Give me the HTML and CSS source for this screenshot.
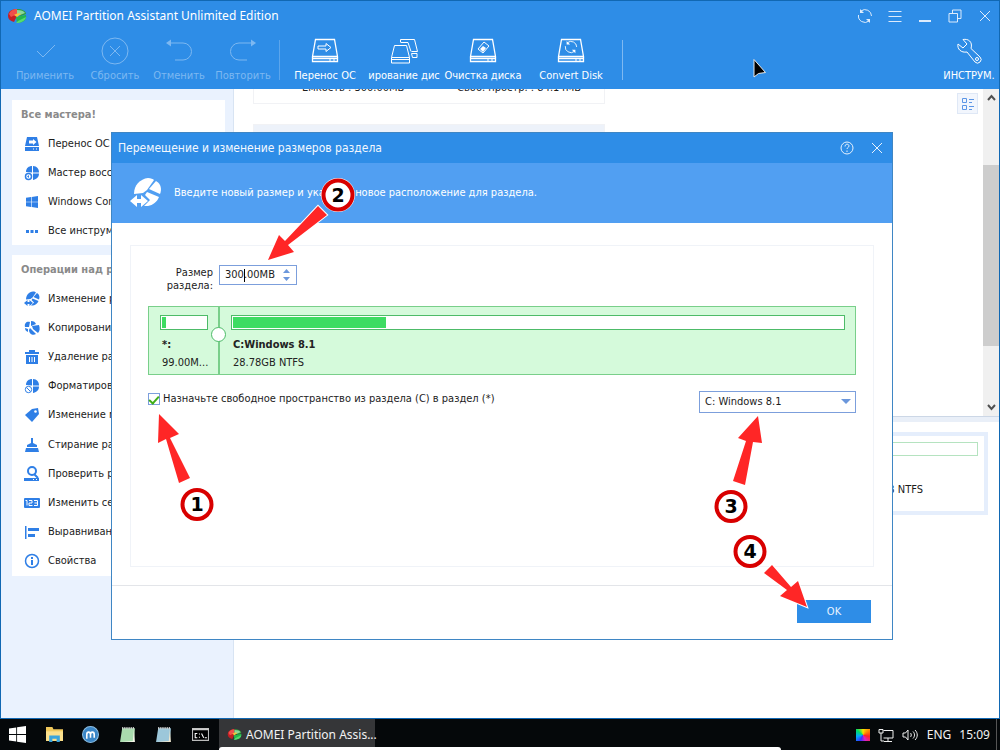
FILE: index.html
```html
<!DOCTYPE html>
<html lang="ru">
<head>
<meta charset="utf-8">
<title>AOMEI Partition Assistant</title>
<link rel="stylesheet" href="styles.css">
</head>
<body>
<svg width="0" height="0" class="defs" aria-hidden="true">
  <defs>
    <symbol id="logo" viewBox="0 0 20 16">
      <path d="M1 8C1 3 5 1 10 1v7L7 14C3 13 1 11 1 8z" fill="#c41f24"/>
      <path d="M2 6c1-3 4-5 8-5v5L4 9z" fill="#ef4f4b"/>
      <path d="M10 1c5 0 9 2 9 5l-5 2-4-2z" fill="#2f9c3b"/>
      <path d="M10 2c4 0 7 1 8 3l-5 2-3-1z" fill="#8ad79a"/>
      <path d="M9 9l10-2c1 4-2 8-9 8z" fill="#23b84d"/>
      <path d="M9 15c5 0 9-2 10-6l-8 4z" fill="#56dc6d"/>
      <path d="M7 7c3-2 6-2 7-1l-4 3z" fill="#f3c63d"/>
    </symbol>
    <symbol id="disk" viewBox="0 0 28 26">
      <path d="M4.500 1.500h19l3 17h-25zM1.500 18.500v5h25v-5M1.500 20.500h25" fill="none" stroke="currentColor" stroke-width="1.300"/>
      <path d="M18 22h2M22 22h2" stroke="currentColor"/>
    </symbol>
    <symbol id="resize" viewBox="0 0 32 32">
      <path d="M4 17C4 8 10 2 18 1c3 0 5 1 6 2l-7 10-4 3z" fill="currentColor"/>
      <path d="M26 4c5 3 6 8 4 13l-11-5z" fill="currentColor"/>
      <path d="M17 15l12 5c-2 5-6 8-11 9h-4l6-6-5-5z" fill="currentColor"/>
      <path d="M0 24l7-6v4h4v-4l7 6-7 6v-4H7v4z" fill="currentColor"/>
    </symbol>
    <symbol id="windows" viewBox="0 0 16 16">
      <path d="M0 2.300l6.800-1v6.300H0zM7.600 1.200L16 0v7.600H7.600zM0 8.400h6.800v6.300L0 13.700zM7.600 8.400H16V16l-8.400-1.200z" fill="currentColor"/>
    </symbol>
    <symbol id="refresh" viewBox="0 0 16 16">
      <path d="M4 3a6.500 6.500 0 0 1 10.500 5M12 13A6.500 6.500 0 0 1 1.500 7" fill="none" stroke="currentColor"/>
      <path d="M3 1v4h4zM13 15v-4H9z" fill="currentColor"/>
    </symbol>
  </defs>
</svg>

<div class="desktop">
  <main class="window">
    <header class="header">
      <div class="titlebar">
        <svg class="logo"><use href="#logo"/></svg>
        <h1>AOMEI Partition Assistant Unlimited Edition</h1>
        <div class="controls">
          <button aria-label="Обновить"><svg viewBox="0 0 16 16" class="plain"><use href="#refresh"/></svg></button>
          <button aria-label="Меню"><svg viewBox="0 0 16 16"><path d="M1.500 3.500h13M1.500 8.500h13M1.500 13.500h13"/></svg></button>
          <button aria-label="Свернуть"><svg viewBox="0 0 16 16"><path d="M2 13h12" stroke-width="2"/></svg></button>
          <button aria-label="Восстановить"><svg viewBox="0 0 16 16"><path d="M2 5.500h8.500V14H2zM5.500 5V2H14v8.500h-3.500"/></svg></button>
          <button aria-label="Закрыть"><svg viewBox="0 0 16 16"><path d="M3 3l10 10M13 3L3 13"/></svg></button>
        </div>
      </div>
      <nav class="toolbar">
        <button class="tool apply" disabled><svg viewBox="0 0 28 28"><path d="M6 14l6 6L24 8"/></svg>Применить</button>
        <button class="tool reset" disabled><svg viewBox="0 0 28 28"><circle cx="14" cy="14" r="13"/><path d="M9 9l10 10M19 9L9 19"/></svg>Сбросить</button>
        <button class="tool undo" disabled><svg viewBox="0 0 28 28"><path d="M4 6h14a8.500 8.500 0 0 1 0 17h-8"/><path d="M1 6l5-3.500v7z" fill="currentColor" stroke="none"/></svg>Отменить</button>
        <button class="tool redo" disabled><svg viewBox="0 0 28 28"><path d="M24 6H10a8.500 8.500 0 0 0 0 17h8"/><path d="M27 6l-5-3.500v7z" fill="currentColor" stroke="none"/></svg>Повторить</button>
        <span class="sep dim"></span>
        <button class="tool migrate"><svg viewBox="0 0 28 28"><use href="#disk" y="1" width="28" height="26"/><path d="M7 9h8V6.500l5 4-5 4V12H7z"/></svg>Перенос ОС</button>
        <button class="tool clone"><svg viewBox="0 0 28 28"><path d="M4.500 8.500h12l3 12v5.500h-18v-5.500zM1.500 20.500h18M1.500 22.500h18M10.500 5.500v-3h14l3 12h-6M11 5.500h7l3 9M21.500 16.500h5.500v4h-4.500z"/></svg>ирование дис</button>
        <button class="tool wipe"><svg viewBox="0 0 28 28"><use href="#disk" y="1" width="28" height="26"/><path d="M9 12l6-7 5 4-6 7z"/><path d="M11 12l3-3 3 2-3 4z" fill="currentColor" stroke="none"/></svg>Очистка диска</button>
        <button class="tool convert"><svg viewBox="0 0 28 28"><use href="#disk" y="1" width="28" height="26"/><use href="#refresh" x="7" y="3" width="14" height="14" stroke="none"/></svg>Convert Disk</button>
        <span class="sep"></span>
        <button class="tool tools"><svg viewBox="0 0 28 28"><path d="M3 7l5 4 4-4-4-4.500c5-1 10 2 8 9L25 20a3.500 3.500 0 0 1-5 5L12 15C6 16 2 12 3 7z"/><circle cx="22" cy="22" r="1.500"/></svg>ИНСТРУМ.</button>
      </nav>
    </header>

    <div class="content">
      <aside class="sidebar">
        <section class="panel wizards">
          <h2>Все мастера!</h2>
          <ul>
            <li><svg viewBox="0 0 16 16"><path d="M3 1h10l2 9H1zM1 11h14v4H1z"/><path d="M5 4.500h4V3l3.500 3L9 9V7.500H5z" fill="#fff"/><path d="M9 13h1M12 13h1" stroke="#fff"/></svg>Перенос ОС на SSD</li>
            <li><svg viewBox="0 0 16 16"><path d="M2 7C2 3 5 1 8 1v6.500zM9 1c4 0 6 3 6 6.500H9zM15 8.500c0 4-3 6-6 6.500V8.500z"/><circle cx="4.500" cy="11.500" r="3" fill="none" stroke="#2f7fe6" stroke-width="1.500"/><path d="M3 11.500l2-1.500v3z"/></svg>Мастер восстановления</li>
            <li><svg viewBox="0 0 16 16"><use href="#windows" x="2" y="2" width="12" height="12"/></svg>Windows Comp</li>
            <li><svg viewBox="0 0 16 16"><path d="M2 7h3v3H2zM6.500 7h3v3h-3zM11 7h3v3h-3z"/></svg>Все инструменты</li>
          </ul>
        </section>
        <section class="panel operations">
          <h2>Операции над разделом</h2>
          <ul>
            <li><svg viewBox="0 0 16 16"><use href="#resize"/></svg>Изменение размера</li>
            <li><svg viewBox="0 0 16 16"><path d="M1 7C0 3 3 1 6 2L5 7zM7 1c3 0 4 1 5 3L7 6zM8 6l7-1c1 3 1 6-1 8L9 9zM6 8l2 2 4 4c-3 2-7 0-7-4z"/><path d="M1 8l3 1v3C2 11 1 10 1 8z"/></svg>Копирование раздела</li>
            <li><svg viewBox="0 0 16 16"><path d="M5 1h6v2h4v2H1V3h4zM2 6h12v9H2z"/><path d="M5.500 8v5M8 8v5M10.500 8v5" stroke="#fff"/></svg>Удаление раздела</li>
            <li><svg viewBox="0 0 16 16"><path d="M2 7C2 3 5 1 8 1v6.500zM9 1c4 0 6 3 6 6.500H9zM15 8.500c0 4-3 6-6 6.500V8.500z"/><circle cx="4.500" cy="11.500" r="3.200" fill="#fff" stroke="#2f7fe6"/><path d="M2.500 9.500l4 4" stroke="#2f7fe6"/></svg>Форматирование раздела</li>
            <li><svg viewBox="0 0 16 16"><path d="M1 8l7-6 6-1 1 6-7 8z"/><circle cx="11.500" cy="4.500" r="1.300" fill="#fff"/></svg>Изменение метки</li>
            <li><svg viewBox="0 0 16 16"><path d="M7 1h2v5l4 2v2H3V8l4-2zM2 11h12l1 4H1z"/></svg>Стирание раздела</li>
            <li><svg viewBox="0 0 16 16"><circle cx="8" cy="5" r="4" fill="none" stroke="#2f7fe6" stroke-width="2"/><path d="M10 8l4 4" stroke="#2f7fe6" stroke-width="2"/><path d="M0 12h15v3H0z"/><path d="M9 13.500h1M12 13.500h1" stroke="#fff"/></svg>Проверить раздел</li>
            <li><svg viewBox="0 0 16 16"><rect y="3" width="16" height="10" rx="1"/><path d="M1.500 5.500H3v5M5 5.500h3V8H5v2.500h3.500M10 5.500h3.500v5H10M10.500 8h3" fill="none" stroke="#fff"/></svg>Изменить серийный</li>
            <li><svg viewBox="0 0 16 16"><path d="M1 2h1.500v13H1zM4 4h11v3H4zM4 10h7v3H4z"/></svg>Выравнивание раздела</li>
            <li><svg viewBox="0 0 16 16"><circle cx="8" cy="8" r="6.500" fill="none" stroke="#2f7fe6" stroke-width="1.500"/><path d="M7 4h2v2H7zM7 7h2v5H7z"/></svg>Свойства</li>
          </ul>
        </section>
      </aside>

      <div class="workspace">
        <section class="disks">
          <div class="list">
            <div class="disk-card"><span>Ёмкость : 300.00MB</span><span>Своб. простр. : 84.14MB</span></div>
            <div class="disk-card next"></div>
          </div>
          <button class="view" aria-label="Вид"><svg viewBox="0 0 14 14"><path d="M1.500 1.500h4v4h-4zM1.500 8.500h4v4h-4zM8 2.500h5M8 5.500h3M8 9.500h5M8 12.500h3"/></svg></button>
          <div class="scrollbar">
            <button aria-label="Вверх"><svg viewBox="0 0 9 9"><path d="M1 7l3.500-4L8 7"/></svg></button>
            <div class="track"><div class="thumb"></div></div>
            <button aria-label="Вниз"><svg viewBox="0 0 9 9"><path d="M1 2l3.500 4L8 2"/></svg></button>
          </div>
        </section>
        <section class="maps">
          <div class="map-card"><div class="usage"></div><span>28.78GB NTFS</span></div>
        </section>
      </div>
    </div>
  </main>

  <footer class="taskbar">
    <div class="launch">
      <button aria-label="Пуск"><svg viewBox="0 0 16 16" color="#fff"><use href="#windows"/></svg></button>
      <button aria-label="Проводник"><svg viewBox="0 0 16 16"><path d="M0 1h6l1 2h9v11H0z" fill="#f0c85c"/><path d="M0 5h16v9H0z" fill="#fbe08d"/><path d="M3 9h10v6h-3v-3H6v3H3z" fill="#3aa4dc"/></svg></button>
      <button aria-label="Maxthon"><svg viewBox="0 0 16 16"><circle cx="8" cy="8" r="7.500" fill="#3b86c6" stroke="#8bbce0"/><path d="M4.500 12V8c0-3 3.500-3 3.500 0v3M8 8c0-3 3.500-3 3.500 0v3" fill="none" stroke="#fff" stroke-width="1.500"/></svg></button>
      <button aria-label="Notepad"><svg viewBox="0 0 16 16"><path d="M3 2h12l-1 13H1z" fill="#a9dcae"/><path d="M13 14l1-11 1 12H2z" fill="#f4f5e8"/><path d="M3 2h12" stroke="#ddd" stroke-width="2" stroke-dasharray="1 1"/></svg></button>
      <button aria-label="Блокнот"><svg viewBox="0 0 16 16"><path d="M3 2h12l-1 13H1z" fill="#9cc7da"/><path d="M13 14l1-11 1 12H2z" fill="#eee6cf"/><path d="M3 2h12" stroke="#ddd" stroke-width="2" stroke-dasharray="1 1"/></svg></button>
      <button aria-label="Командная строка"><svg viewBox="0 0 16 16"><path d="M.5 2.500h15v11H.5z" fill="#000" stroke="#bbb"/><path d="M0 3h16" stroke="#ccc" stroke-width="2"/><path d="M5 7H3v4h2M7 7v1M7 10v1M9 7l2 4M12 11h2" fill="none" stroke="#fff"/></svg></button>
    </div>
    <button class="task"><svg class="logo"><use href="#logo"/></svg>AOMEI Partition Assis...</button>
    <div class="tray">
      <span class="spectrum"></span>
      <svg viewBox="0 0 16 16"><path d="M5.500 3.500H15v7.500H5.500M10 11v3M6 14.500h8M1 2.500h4v3.500H1zM3 6v8h3"/></svg>
      <svg viewBox="0 0 16 16"><path d="M1 6h2.500L6 3v10L3.500 10H1zM8.500 6c1 1 1 3 0 4M11 4.500c2 2 2 5 0 7M13 3c3 3 3 7 0 10"/></svg>
      <span class="lang">ENG</span>
      <time>15:09</time>
    </div>
    <div class="sheet"></div>
  </footer>

  <section class="dialog" role="dialog" aria-labelledby="dialog-title">
    <div class="dialog-title">
      <h2 id="dialog-title">Перемещение и изменение размеров раздела</h2>
      <button aria-label="Справка"><svg viewBox="0 0 14 14"><circle cx="7" cy="7" r="6"/><path d="M5 5.500c0-3 4-3 4-.5 0 1.500-2 1.500-2 3M7 9.500V11"/></svg></button>
      <button aria-label="Закрыть окно"><svg viewBox="0 0 14 14"><path d="M2 2l10 10M12 2L2 12"/></svg></button>
    </div>
    <div class="banner">
      <svg><use href="#resize"/></svg>
      <p>Введите новый размер и укажите новое расположение для раздела.</p>
    </div>
    <form class="form">
      <div class="size-row">
        <label for="size">Размер раздела:</label>
        <div class="spin">
          <input id="size" type="text" value="300.00MB">
          <svg viewBox="0 0 7 14"><path d="M0 5l3.500-4L7 5zM0 9l3.500 4L7 9z"/></svg>
          <i class="caret"></i>
        </div>
      </div>
      <div class="parts">
        <div class="part small">
          <div class="usage"><i style="width:9%"></i></div>
          <strong>*:</strong><span>99.00M...</span>
          <i class="handle"></i>
        </div>
        <div class="part large">
          <div class="usage"><i style="width:25%"></i></div>
          <strong>C:Windows 8.1</strong><span>28.78GB NTFS</span>
        </div>
      </div>
      <div class="options">
        <label class="check"><input type="checkbox" checked>Назначьте свободное пространство из раздела (C) в раздел (*)</label>
        <div class="pick">
          <select aria-label="Раздел"><option>C: Windows 8.1</option></select>
        </div>
      </div>
    </form>
    <div class="dialog-footer"><button type="button">OK</button></div>
  </section>

  <svg class="notes" viewBox="0 0 1000 750">
    <g class="arrow">
      <path d="M159 414l20 20-9 4 20 40-11 5-13-44-8 4z"/>
      <path d="M268 260l11-25 6 6 33-35 9 9-39 30 6 7z"/>
      <path d="M758 416l4 27-9-1-8 43-12-4 13-40-8-3z"/>
      <path d="M807 607l-27-11 7-6-23-17 8-8 19 22 7-6z"/>
    </g>
    <g class="badge">
      <circle class="halo" cx="197" cy="504.500" r="17"/><circle cx="197" cy="504.500" r="14.500"/><text x="197" y="511">1</text>
      <circle class="halo" cx="338" cy="195" r="17"/><circle cx="338" cy="195" r="14.500"/><text x="338" y="202">2</text>
      <circle class="halo" cx="731" cy="506.500" r="17"/><circle cx="731" cy="506.500" r="14.500"/><text x="731" y="513">3</text>
      <circle class="halo" cx="750" cy="551.500" r="17"/><circle cx="750" cy="551.500" r="14.500"/><text x="750" y="558">4</text>
    </g>
    <path class="cursor" d="M754 59.500V77l4.500-3.500 7-1z"/>
  </svg>
</div>
</body>
</html>
```

FILE: styles.css
```css
* { box-sizing: border-box; }
body {
  margin: 0;
  font: 11px/14px "DejaVu Sans Condensed", "DejaVu Sans", sans-serif;
  color: #1c1c1c;
}
h1, h2, p, ul { margin: 0; padding: 0; font-weight: 400; }
button { border: 0; padding: 0; background: none; color: inherit; font: inherit; }
svg { display: block; flex: none; }
.defs { position: absolute; }

.desktop { position: relative; height: 100vh; display: flex; flex-direction: column; overflow: hidden; }
.window { flex: 1; min-height: 0; display: flex; flex-direction: column; border: 1px solid #1168b3; background: #fff; }

.header { flex: none; background: #2e8de7; color: #fff; }
.titlebar { display: flex; align-items: center; height: 30px; padding: 0 6px; }
.logo { width: 20px; height: 16px; }
.titlebar h1 { flex: 1; padding-left: 7px; font: 12px/16px "Noto Sans", sans-serif; }
.controls { display: flex; gap: 14px; }
.controls svg { width: 16px; height: 16px; fill: none; stroke: #dcebfc; stroke-width: 1; }
.controls .plain { stroke: none; color: #dcebfc; }
.toolbar { display: flex; align-items: center; height: 58px; padding: 0 1px 1px 10px; }
.tool { display: flex; flex-direction: column; align-items: center; gap: 4px; white-space: nowrap; }
.tool svg { width: 28px; height: 28px; fill: none; stroke: currentColor; stroke-width: 1; }
.tool:disabled { color: #7db8f1; }
.apply { width: 68px; }
.reset, .redo { width: 72px; }
.undo { width: 56px; }
.migrate { width: 90px; }
.clone { width: 68px; }
.wipe { width: 90px; }
.convert { width: 86px; }
.tools { width: 58px; margin-left: auto; }
.sep { width: 1px; height: 40px; background: #7fb9f1; }
.sep.dim { background: #5ba5ec; }
.convert + .sep { margin-left: 8px; }

.content { flex: 1; min-height: 0; display: flex; }
.sidebar { width: 233px; flex: none; padding: 11px 8px 0 11px; background: #eaf2fe; border-right: 1px solid #d8e4f3; display: flex; flex-direction: column; gap: 10px; }
.panel { background: #fff; padding: 7px 0 0 9px; display: flex; flex-direction: column; }
.panel h2 { color: #8a8a8a; font-size: 11px; font-weight: 700; line-height: 16px; padding-bottom: 6px; white-space: nowrap; }
.panel ul { flex: 1; list-style: none; display: flex; flex-direction: column; }
.panel li { flex: 1; display: flex; align-items: center; gap: 8px; padding-left: 3px; white-space: nowrap; }
.panel li svg { width: 16px; height: 16px; fill: #2f7fe6; color: #2f7fe6; }
.wizards { height: 145px; }
.operations { height: 321px; }

.workspace { flex: 1; min-width: 0; display: flex; flex-direction: column; }
.disks { height: 328px; flex: none; display: flex; border-bottom: 1px solid #ccd7e6; }
.list { flex: 1; overflow: hidden; padding-left: 19px; }
.disk-card { width: 352px; height: 52px; margin-top: -37px; padding: 28px 23px 0 48px; display: flex; justify-content: space-between; border: 1px solid #f1f2f5; }
.disk-card.next { margin-top: 20px; background: #edf2fa; }
.view { width: 21px; height: 21px; margin: 4px 5px 0 0; border: 1px solid #dfe8f6; background: #f2f6fd; display: grid; place-items: center; }
.view svg { width: 14px; height: 14px; fill: none; stroke: #5c96e6; stroke-width: 1; }
.scrollbar { width: 16px; display: flex; flex-direction: column; background: #f0f0f0; }
.scrollbar button { height: 17px; display: grid; place-items: center; }
.scrollbar svg { width: 9px; height: 9px; fill: none; stroke: #505050; stroke-width: 2; }
.track { flex: 1; padding-top: 59px; }
.thumb { height: 181px; background: #cdcdcd; }
.maps { flex: 1; padding: 10px 11px 0 19px; border-top: 5px solid #e9eff8; }
.map-card { height: 83px; padding: 6px; border: 4px solid #e5eefc; text-align: right; }
.map-card .usage { height: 14px; border: 1px solid #b5e3c0; background: #fff; }
.map-card span { display: block; padding: 27px 55px 0 0; }

.taskbar { position: relative; flex: none; height: 31px; display: flex; align-items: center; padding: 0 3px 0 9px; background: #05080a; color: #f2f2f2; font: 12px/16px "Noto Sans", sans-serif; }
.launch { width: 210px; padding-right: 10px; display: flex; justify-content: space-between; }
.launch svg { width: 17px; height: 17px; }
.task { width: 156px; height: 31px; padding-left: 8px; display: flex; align-items: center; gap: 4px; background: #353638; white-space: nowrap; }
.task svg { width: 15px; height: 13px; }
.tray { margin-left: auto; display: flex; align-items: center; gap: 8px; padding-right: 6px; border-right: 1px solid #555; height: 31px; }
.tray svg { width: 16px; height: 16px; fill: none; stroke: #f0f0f0; }
.spectrum { width: 14px; height: 12px; background: conic-gradient(#f7e600, #ff8a00, #f22, #e020c0, #33f, #0af, #0d6, #f7e600); }
.lang { padding-left: 1px; }
.sheet { position: absolute; left: 219px; right: 219px; bottom: 0; height: 3px; background: #fff; border-radius: 3px 3px 0 0; }

.dialog { position: absolute; left: 111px; right: 107px; top: 132px; display: flex; flex-direction: column; border: 1px solid #3f86c4; background: #fff; }
.dialog-title { display: flex; align-items: center; height: 30px; padding: 0 8px 0 6px; gap: 16px; background: #2e8de7; color: #f3f8fe; }
.dialog-title h2 { flex: 1; font-size: 12px; }
.dialog-title svg { width: 14px; height: 14px; fill: none; stroke: #e8f2fd; stroke-width: 1; }
.banner { display: flex; align-items: center; height: 60px; padding-left: 18px; gap: 12px; background: #519ff2; color: #fff; }
.banner svg { width: 32px; height: 32px; }
.form { height: 322px; margin: 22px 18px 0; padding: 19px 17px 0; border: 1px solid #f0f3f8; }
.size-row { display: flex; gap: 6px; }
.size-row label { width: 65px; line-height: 13px; text-align: right; padding-top: 1px; }
.spin { position: relative; width: 78px; height: 20px; display: flex; align-items: center; padding: 0 6px 0 5px; border: 1px solid #7c9fdc; }
.spin input { flex: 1; min-width: 0; border: 0; padding: 0; background: none; font: inherit; color: inherit; outline: 0; }
.spin svg { width: 7px; height: 14px; fill: #6b97dc; }
.caret { position: absolute; left: 24px; top: 3px; width: 1px; height: 13px; background: #000; }
.parts { display: flex; margin-top: 14px; height: 69px; }
.part { position: relative; padding: 8px 10px 0 11px; border: 1px solid #79cf8a; background: #d5fadb; display: flex; flex-direction: column; color: #222; }
.part .usage { height: 15px; padding: 1px; border: 1px solid #4dbb68; background: #fff; }
.part .usage i { display: block; height: 100%; background: #3ddc62; }
.part strong { padding: 8px 0 4px 2px; }
.part span { padding-left: 2px; white-space: nowrap; }
.part.small { width: 71px; }
.part.large { flex: 1; }
.handle { position: absolute; z-index: 1; right: -8px; top: 20px; width: 15px; height: 15px; border: 1px solid #4dbb68; border-radius: 50%; background: #fff; }
.options { display: flex; justify-content: space-between; align-items: flex-start; margin-top: 16px; }
.check { display: flex; align-items: center; gap: 3px; height: 16px; }
.check input { appearance: none; width: 12px; height: 12px; margin: 0; border: 1px solid #7c9fdc; background: #fff; display: grid; place-items: center; }
.check input:checked::before { content: ""; width: 4px; height: 8px; margin-bottom: 3px; border: solid #3fae18; border-width: 0 2px 2px 0; transform: rotate(42deg); }
.pick { position: relative; width: 157px; }
.pick::after { content: ""; position: absolute; right: 5px; top: 8px; border: solid transparent; border-width: 5px 5px 0; border-top-color: #6b97dc; pointer-events: none; }
.pick select { display: block; appearance: none; width: 100%; height: 22px; padding: 0 5px; border: 1px solid #7c9fdc; border-radius: 0; color: inherit; font: inherit; background: #fff; }
.dialog-footer { display: flex; justify-content: flex-end; margin-top: 18px; padding: 14px 21px 16px; border-top: 1px solid #e3e5e9; }
.dialog-footer button { width: 74px; height: 23px; background: #2e8de7; color: #e8f3ff; }

.notes { position: absolute; left: 0; top: 0; width: 1000px; height: 750px; pointer-events: none; }
.arrow path { fill: #ff2626; stroke: #fff; stroke-width: 2; paint-order: stroke; }
.badge circle { fill: #fff; stroke: #d80000; stroke-width: 4; }
.badge .halo { stroke: none; fill: #fff; }
.badge text { font: bold 19px "DejaVu Sans", sans-serif; text-anchor: middle; fill: #000; }
.cursor { fill: #000; stroke: #e8e8e8; }
```
